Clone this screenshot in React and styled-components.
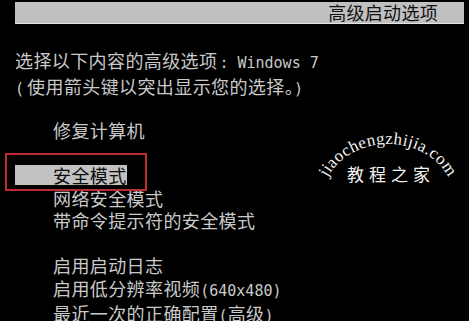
import React from 'react';
import styled, { createGlobalStyle } from 'styled-components';

const Global = createGlobalStyle`
  html, body { margin: 0; padding: 0; background: #000; }
`;

const Screen = styled.div`
  position: relative;
  width: 469px;
  height: 321px;
  overflow: hidden;
  background: #000;
  color: #c9c9c9;
  font-family: "Noto Sans CJK SC", "DejaVu Sans", sans-serif;
  font-size: 18px;
  letter-spacing: 0.4px;
  padding-left: 15px;
  box-sizing: border-box;
`;

const TitleBar = styled.div`
  margin: 2px 5px 0 0;
  height: 21px;
  background: #c0c0c0;
  border-bottom: 1px solid #e2e2e2;
  color: #111;
  display: flex;
  align-items: center;
  justify-content: flex-end;
  padding-right: 26px;
  font-size: 18px;
  letter-spacing: 0.3px;
  line-height: 21px;
`;

const Prompt = styled.div`
  margin-top: 25px;
  line-height: 23px;
`;

const Line = styled.div`
  white-space: nowrap;
`;

const Mono = styled.span`
  font-family: "DejaVu Sans Mono", "Liberation Mono", monospace;
  font-size: 15px;
  letter-spacing: 0;
  margin-left: ${p => p.$gap || 0}px;
  margin-right: ${p => p.$after || 0}px;
`;

const Menu = styled.div`
  margin-top: 18px;
  line-height: 22.5px;
`;

const Item = styled.div`
  padding-left: 38px;
  white-space: nowrap;
  margin-top: ${p => (p.$blank ? 22.5 : 0)}px;
`;

const SelectedRow = styled.div`
  position: relative;
  margin-top: 22.5px;
  height: 22.5px;
  display: flex;
  align-items: center;
`;

const Selected = styled.span`
  display: inline-block;
  background: #c2c2c2;
  color: #0c0c0c;
  padding-left: 38px;
  line-height: 20px;
  height: 20px;
`;

const RedMark = styled.div`
  position: absolute;
  left: -10px;
  top: -11px;
  width: 142px;
  height: 38px;
  border: 2.5px solid #bf2a2e;
  box-sizing: border-box;
`;

const Watermark = styled.svg`
  position: absolute;
  left: 305px;
  top: 125px;
  overflow: visible;
`;

export default function App() {
  return (
    <>
      <Global />
      <Screen>
        <TitleBar>高级启动选项</TitleBar>
        <Prompt>
          <Line>选择以下内容的高级选项<Mono $gap={2}>: Windows 7</Mono></Line>
          <Line><Mono $after={3}>(</Mono>使用箭头键以突出显示您的选择。<Mono>)</Mono></Line>
        </Prompt>
        <Menu>
          <Item>修复计算机</Item>
          <SelectedRow>
            <Selected>安全模式</Selected>
            <RedMark />
          </SelectedRow>
          <Item>网络安全模式</Item>
          <Item>带命令提示符的安全模式</Item>
          <Item $blank>启用启动日志</Item>
          <Item>启用低分辨率视频<Mono>(640x480)</Mono></Item>
          <Item>最近一次的正确配置<Mono>(</Mono>高级<Mono>)</Mono></Item>
        </Menu>
        <Watermark width="160" height="100" viewBox="0 0 160 100">
          <defs>
            <path id="arc" d="M 17 75 A 66 56 0 0 1 149 75" />
          </defs>
          <text fill="#f2f2f2" fontFamily="'Liberation Serif', serif" fontSize="17">
            <textPath href="#arc" startOffset="50%" textAnchor="middle">jiaochengzhijia.com</textPath>
          </text>
          <text x="86" y="56" fill="#f2f2f2" fontFamily="'Noto Sans CJK SC', sans-serif" fontSize="17" letterSpacing="5" textAnchor="middle">教程之家</text>
        </Watermark>
      </Screen>
    </>
  );
}
